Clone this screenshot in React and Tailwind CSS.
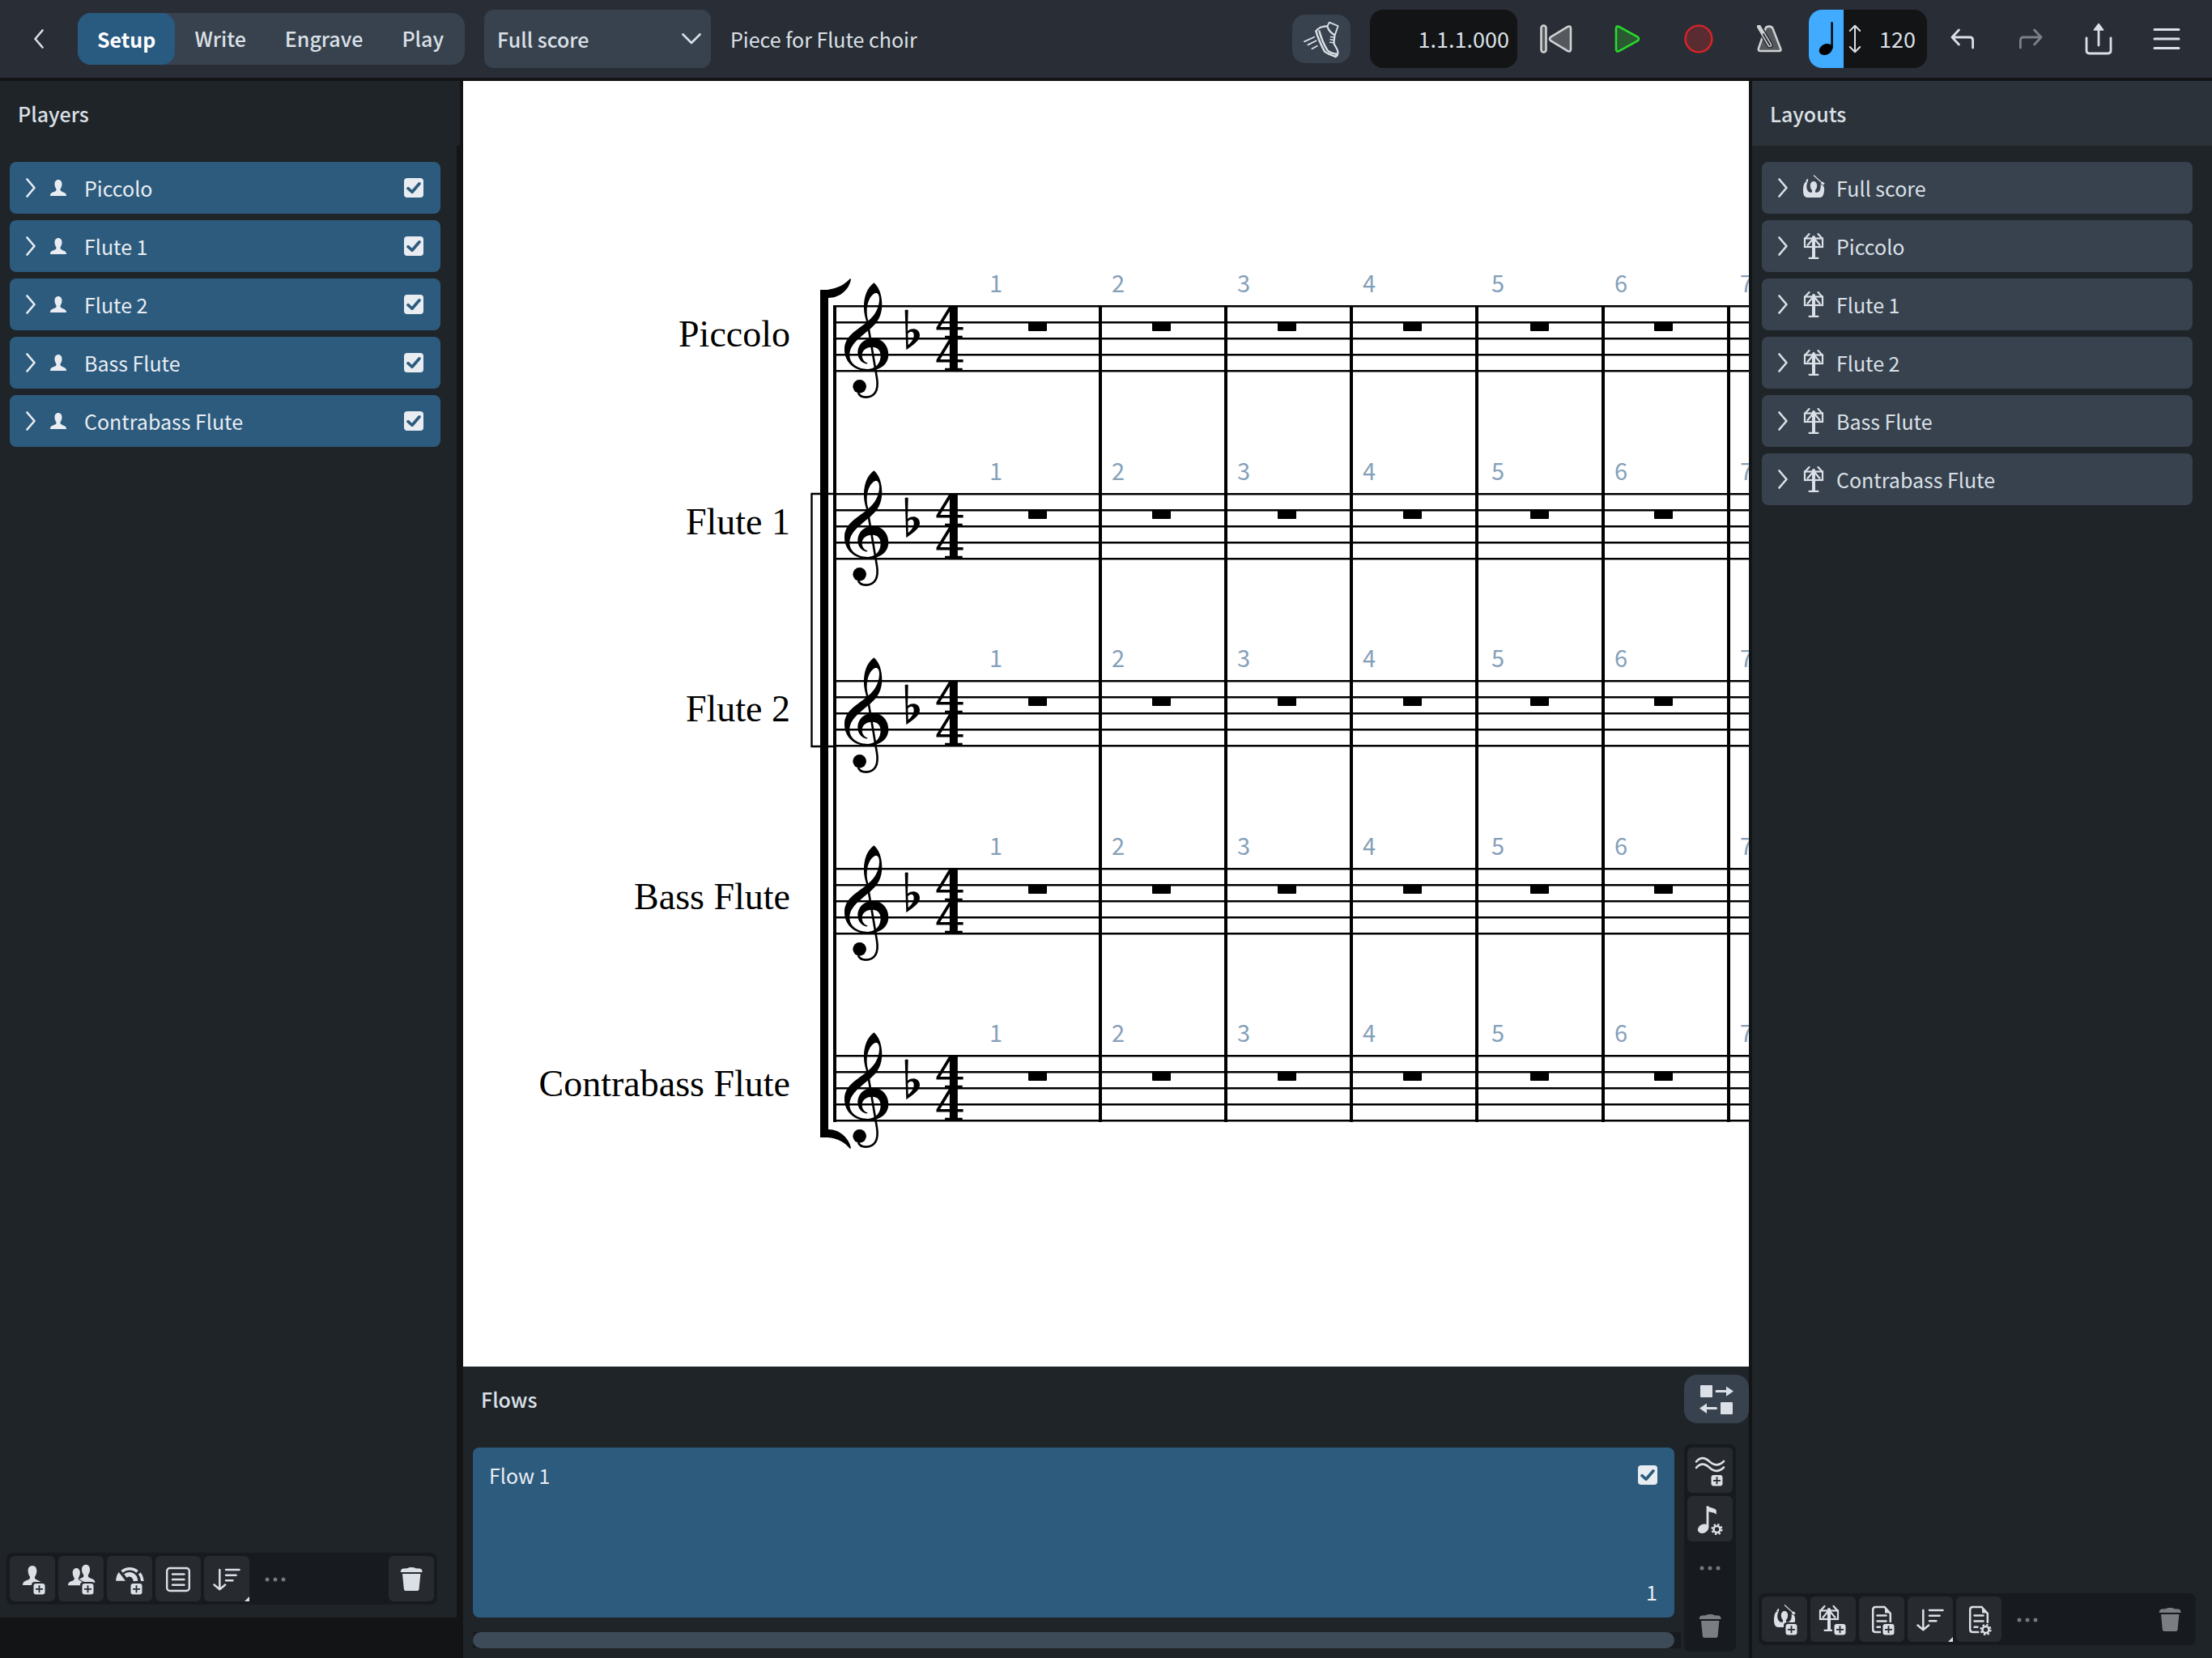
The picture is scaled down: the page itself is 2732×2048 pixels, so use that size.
import React from "react";

const INK = "#dbe0e7";

const players = ["Piccolo", "Flute 1", "Flute 2", "Bass Flute", "Contrabass Flute"];
const layouts = ["Full score", ...players];
const modes = ["Setup", "Write", "Engrave", "Play"];

/* ---------- small shared drawings ---------- */

function Chevron({ className }) {
  return (
    <svg className={className} width="12" height="24" viewBox="0 0 12 24" fill="none" stroke="currentColor" strokeWidth="2.6" strokeLinecap="round" strokeLinejoin="round">
      <path d="M1.5 1.5 L10.5 12 L1.5 22.5" />
    </svg>
  );
}

function PersonShape() {
  return (
    <path d="M28 12C31.5 12 33.4 14.8 33.4 18.5C33.4 22 32 24 31 25.8V27.6C32.4 30 37 30.4 39 32.6C39.9 33.6 40 35 40 36H16C16 33.4 17 32 19 31C21.6 29.7 24.4 29.4 25 27.6V25.8C24 24 22.6 22 22.6 18.5C22.6 14.8 24.5 12 28 12Z" />
  );
}

function PlusBadge() {
  return (
    <g>
      <rect x="27" y="32" width="18" height="18" rx="4" fill="#272a2f" />
      <rect x="29.5" y="34" width="14" height="13.5" rx="3" fill={INK} />
      <path d="M36.5 36.2V45.3M32 40.8H41" stroke="#272a2f" strokeWidth="1.8" />
    </g>
  );
}

function GearBadge() {
  return (
    <g>
      <circle cx="36.5" cy="41" r="8.6" fill="#272a2f" />
      <circle cx="36.5" cy="41" r="4" fill="none" stroke={INK} strokeWidth="2.6" />
      <circle cx="36.5" cy="41" r="6" fill="none" stroke={INK} strokeWidth="2.2" strokeDasharray="2.4 2.31" />
    </g>
  );
}

function ConductorShape() {
  return (
    <g>
      <path fill={INK} d="M1 20C1 14 2 10 4.4 8.6L6.4 9C5.2 12 5 14.6 5.6 17C6.4 20.4 8.8 22.4 12 21.6V19C10.4 17.4 9.8 15 9.8 13C9.8 10 11.6 8 14 8C16.4 8 18.2 10 18.2 13C18.2 15 17.6 17.4 16 19V21.6C19.2 22.4 21.6 20.4 22.4 17C22.9 14.6 22.8 13 22.6 11.8L26 13.5C27 15.4 27.4 17.6 27 20C26.6 24.4 25 28 22 28H6C3 28 1 24.4 1 20Z" />
      <path d="M4.6 7.8L6.6 5V8.4Z" fill={INK} stroke={INK} strokeWidth="1" />
      <path d="M14 0.5L24 9.6" stroke={INK} strokeWidth="1.2" />
      <path d="M23.6 9.4L26.8 11.6" stroke={INK} strokeWidth="3" />
    </g>
  );
}

function StandShape() {
  return (
    <g fill="none" stroke={INK} strokeWidth="2.2">
      <path d="M1.5 6.5L6.5 1M17.5 1L22.5 6.5" strokeLinecap="round" />
      <rect x="1" y="6.5" width="22" height="10.5" />
      <path d="M12 6L4 15.5M12 6L20 15.5" />
      <path d="M12 5V30" strokeWidth="4" strokeLinecap="round" />
      <path d="M6.5 30.8H17.5" strokeLinecap="round" />
    </g>
  );
}

function Glyph56({ children }) {
  return (
    <svg width="56" height="56" viewBox="0 0 56 56" fill={INK} aria-hidden="true">
      {children}
    </svg>
  );
}

function AddPlayer() {
  return (
    <Glyph56>
      <PersonShape />
      <PlusBadge />
    </Glyph56>
  );
}

function AddGroup() {
  return (
    <Glyph56>
      <g transform="translate(8 -0.5) scale(0.93)">
        <PersonShape />
      </g>
      <g transform="translate(-1.5 4.5) scale(0.85 0.88)" stroke="#272a2f" strokeWidth="2.4" paintOrder="stroke">
        <PersonShape />
      </g>
      <PlusBadge />
    </Glyph56>
  );
}

function AddEnsemble() {
  return (
    <Glyph56>
      <path d="M14.8 20L23 30.8H11.2C11.2 26.5 12.4 23 14.8 20Z" />
      <g fill="none" stroke={INK}>
        <path d="M18.6 19.4C24 14.6 32.4 14.6 37.6 19.4" strokeWidth="3.6" />
        <path d="M40.2 21.4C42.4 24 43.6 27.4 43.8 31" strokeWidth="3.4" />
        <path d="M22.8 24.6C28.6 20.4 35 24 35.6 31" strokeWidth="5.6" />
      </g>
      <PlusBadge />
    </Glyph56>
  );
}

function ListIcon() {
  return (
    <Glyph56>
      <g fill="none" stroke={INK} strokeWidth="2.4" strokeLinecap="round">
        <rect x="14.2" y="15" width="27.6" height="28" rx="3.5" />
        <path d="M21 22.5H35.5M21 29H35.5M21 35.7H35.5" />
      </g>
    </Glyph56>
  );
}

function SortIcon() {
  return (
    <Glyph56>
      <g fill="none" stroke={INK} strokeWidth="2.5" strokeLinecap="round" strokeLinejoin="round">
        <path d="M19.3 17V40.5M12.5 35.5L19.3 41.3L26.2 35.5" />
        <path d="M27 17H43.5M27 23.7H39.6M27 30.3H35.4" />
      </g>
      <path d="M56 50V56H50Z" />
    </Glyph56>
  );
}

function TrashIcon({ color = INK }) {
  return (
    <svg width="56" height="56" viewBox="0 0 56 56" fill={color} aria-hidden="true">
      <path d="M14.8 20C14.8 17 16 15.8 18.5 15.6L23 15.2C25 13.6 31.5 13.6 33.5 15.2L38 15.6C40.5 15.8 41.6 17 41.6 20Z" />
      <path d="M17 22H39.4L37.6 40.5C37.4 42.4 36.4 43 34.8 43H21.6C20 43 19 42.4 18.8 40.5Z" />
    </svg>
  );
}

function DocShape() {
  return (
    <g fill="none" stroke={INK} strokeWidth="2.5" strokeLinecap="round">
      <path d="M38.8 32V21L31.5 13H20.5C18.4 13 17.2 14.2 17.2 16.4V40.4C17.2 42.6 18.4 44 20.5 44H27.5" />
      <path d="M32 13.2V20.6H38.6Z" fill={INK} stroke="none" />
      <path d="M22.5 23.6H33.5M22.5 30.6H33.5M22.5 37.8H26.5" />
    </g>
  );
}

function Dots() {
  return (
    <svg width="56" height="56" viewBox="0 0 56 56" fill="#74787e" aria-hidden="true">
      <circle cx="18" cy="29" r="2.5" />
      <circle cx="28" cy="29" r="2.5" />
      <circle cx="38" cy="29" r="2.5" />
    </svg>
  );
}

const toolStyles = {
  raised: "size-14 shrink-0 rounded-md bg-[#272a2f]",
  menu: "size-14 shrink-0 rounded-md rounded-br-none bg-[#272a2f]",
  plain: "size-14 shrink-0 rounded-md",
};

function ToolButton({ label, kind = "raised", children }) {
  return (
    <button type="button" aria-label={label} className={toolStyles[kind]}>
      {children}
    </button>
  );
}

function Tick({ label }) {
  return (
    <span className="relative size-6 shrink-0">
      <input type="checkbox" defaultChecked aria-label={label} className="block size-6 appearance-none rounded bg-[#e9edf2]" />
      <svg className="pointer-events-none absolute inset-0" width="24" height="24" viewBox="0 0 24 24" fill="none" stroke="#2c5b7e" strokeWidth="3.6" strokeLinecap="round" strokeLinejoin="round">
        <path d="M5 12.6L10 17.2L19 6.8" />
      </svg>
    </span>
  );
}

/* ---------- top bar ---------- */

function HeaderButton({ label, narrow, children }) {
  return (
    <button type="button" aria-label={label} className={narrow ? "flex h-16 w-[84px] items-center justify-center" : "flex h-16 w-[88px] items-center justify-center"}>
      {children}
    </button>
  );
}

function ShoeIcon() {
  return (
    <svg width="72" height="60" viewBox="0 0 72 60" fill="none" stroke={INK} strokeLinecap="round" strokeLinejoin="round">
      <path strokeWidth="1.8" d="M43.3 14.5L45.8 9.6L56.6 14L53 24.6" />
      <path strokeWidth="2.2" d="M29.6 20.4C31 18 35 15.6 38 15C40.5 14.4 42 14 43.3 14.6C44.6 18.6 48 23 52.4 25.2C52.8 29 51 32 51.6 35.4C52.4 39 56.4 42.4 56.4 46.4C56.4 49 55 51.4 53.4 52" />
      <path strokeWidth="2.4" d="M29.4 20.6C31.6 29 36 38 40 45.6C44 48.6 49 50.4 53.4 52C54.4 50.8 54.6 49.6 54.4 48.6C50.6 48.4 46.6 47 43.6 44.4C39.6 38 35.4 28 33.4 20.4" />
      <path strokeWidth="1.5" d="M47.4 27.4L51.4 28M47 30.8L51 31.4M46.6 34.2L50.4 34.8" />
      <path strokeWidth="1.8" d="M15 33.4L27.2 27.8M19.4 37.4L29.6 32.2M24.4 42.2L30.8 38.8" />
    </svg>
  );
}

function TopBar() {
  return (
    <header className="flex h-[100px] shrink-0 items-center border-b-4 border-[#131416] bg-[#292d35] pr-3.5">
      <button type="button" aria-label="Back" className="flex h-16 w-24 items-center justify-center">
        <Chevron className="rotate-180" />
      </button>
      <nav className="flex h-16 rounded-2xl bg-[#37424e] pr-0.5">
        {modes.map((mode, i) => (
          <button
            key={mode}
            type="button"
            className={
              i === 0
                ? "rounded-2xl bg-[#295a80] px-6 font-bold text-white"
                : "px-6 pb-0.5 font-medium"
            }
          >
            {mode}
          </button>
        ))}
      </nav>
      <div className="relative ml-6">
        <select aria-label="Layout" className="block h-[72px] w-[280px] appearance-none rounded-xl bg-[#37424e] px-4 font-medium">
          <option>Full score</option>
        </select>
        <svg className="pointer-events-none absolute top-7 right-3" width="24" height="16" viewBox="0 0 24 16" fill="none" stroke="currentColor" strokeWidth="2.6" strokeLinecap="round" strokeLinejoin="round">
          <path d="M1.5 2.5L12 13L22.5 2.5" />
        </svg>
      </div>
      <h1 className="ml-6 whitespace-nowrap">Piece for Flute choir</h1>

      <div className="ml-auto flex items-center">
        <button type="button" aria-label="Tap tempo" className="mr-6 h-[60px] w-[72px] rounded-2xl bg-[#37424e]">
          <ShoeIcon />
        </button>
        <output className="mr-1 flex h-[72px] w-[182px] items-center justify-end rounded-2xl bg-[#131416] pr-2.5 text-[27px]">1.1.1.000</output>
        <HeaderButton label="Rewind">
          <svg width="40" height="36" viewBox="0 0 40 36" fill="#55595e" stroke="#d0d1d2" strokeWidth="2.6" strokeLinejoin="round">
            <rect x="1.5" y="1.5" width="6" height="33" rx="3" />
            <path d="M34 3.2Q38 1.2 38 5V31Q38 34.8 34 32.8L13.4 20.4Q10.6 18 13.4 15.6Z" />
          </svg>
        </HeaderButton>
        <HeaderButton label="Play">
          <svg width="32" height="36" viewBox="0 0 32 36" fill="#2b5932" stroke="#27da2b" strokeWidth="2.6" strokeLinejoin="round">
            <path d="M6 3.2Q2 1.2 2 5V31Q2 34.8 6 32.8L28.6 20.4Q31.4 18 28.6 15.6Z" />
          </svg>
        </HeaderButton>
        <HeaderButton label="Record">
          <svg width="36" height="36" viewBox="0 0 36 36" fill="#5a2c31" stroke="#da2327" strokeWidth="2.4">
            <circle cx="18" cy="18" r="16.4" />
          </svg>
        </HeaderButton>
        <HeaderButton label="Click">
          <svg width="32" height="34" viewBox="0 0 32 34" fill="none" strokeLinecap="round" strokeLinejoin="round">
            <path d="M10.4 4.4Q11.4 1.6 15 1.6Q18.6 1.6 19.6 4.4L29 28.6Q30.4 32 27.4 32H4Q1 32 2 28.6Z" fill="#55595e" stroke="#d0d1d2" strokeWidth="2.6" />
            <path d="M2.4 2L15.8 24.6" stroke="#292d35" strokeWidth="8" />
            <path d="M2.4 2L15.8 24.6" stroke="#d0d1d2" strokeWidth="5" />
            <path d="M8 11.4L15.8 24.6" stroke="#292d35" strokeWidth="2" />
          </svg>
        </HeaderButton>
        <div className="mr-0.5 ml-1 flex h-[72px] overflow-hidden rounded-2xl bg-[#131416]">
          <button type="button" aria-label="Beat unit" className="flex w-[43px] items-center justify-center bg-[#41abff]">
            <svg width="20" height="44" viewBox="0 0 20 44">
              <ellipse cx="9" cy="35" rx="8.6" ry="6.6" transform="rotate(-28 9 35)" />
              <path d="M15.4 34V2.4Q15.4 1 16.6 1Q17.8 1 17.8 2.4V34Z" />
            </svg>
          </button>
          <button type="button" className="flex w-[103px] items-center justify-between pr-3.5 pl-1.5 text-[27px]">
            <svg width="16" height="36" viewBox="0 0 16 36" fill="none" stroke="currentColor" strokeWidth="2" strokeLinecap="round" strokeLinejoin="round">
              <path d="M8 2V34M1.8 8L8 1.8L14.2 8M1.8 28L8 34.2L14.2 28" />
            </svg>
            120
          </button>
        </div>
        <HeaderButton label="Undo" narrow>
          <svg width="30" height="26" viewBox="0 0 30 26" fill="none" stroke="currentColor" strokeWidth="2.8" strokeLinecap="round" strokeLinejoin="round">
            <path d="M10.4 2L2 11L10.4 20M2 11H24Q27.6 11 27.6 14.6V24" />
          </svg>
        </HeaderButton>
        <HeaderButton label="Redo" narrow>
          <svg width="30" height="26" viewBox="0 0 30 26" fill="none" stroke="#7d8187" strokeWidth="2.8" strokeLinecap="round" strokeLinejoin="round">
            <path d="M19.6 2L28 11L19.6 20M28 11H6Q2.4 11 2.4 14.6V24" />
          </svg>
        </HeaderButton>
        <HeaderButton label="Share" narrow>
          <svg width="34" height="40" viewBox="0 0 34 40" fill="none" stroke="currentColor" strokeWidth="2.8" strokeLinecap="round" strokeLinejoin="round">
            <path d="M2 19V34.6Q2 38 5.4 38H28.6Q32 38 32 34.6V19M17 28V6" />
            <path d="M17 1.6L22.6 9H11.4Z" fill="currentColor" strokeWidth="1.6" />
          </svg>
        </HeaderButton>
        <HeaderButton label="Menu" narrow>
          <svg width="34" height="30" viewBox="0 0 34 30" fill="none" stroke="currentColor" strokeWidth="3" strokeLinecap="round">
            <path d="M2 3.5H32M2 15H32M2 26.5H32" />
          </svg>
        </HeaderButton>
      </div>
    </header>
  );
}

/* ---------- side panels ---------- */

function PlayersPanel() {
  return (
    <aside className="flex w-[572px] shrink-0 flex-col bg-[#131416] pb-[50px]">
      <h2 className="mr-1 flex h-20 items-center bg-[#1f2428] pl-[22px] font-medium">Players</h2>
      <div className="mr-2 flex flex-1 flex-col bg-[#1f2428] pt-5 pr-5 pb-4 pl-3">
        <ul className="flex flex-col gap-2">
          {players.map((name) => (
            <li key={name} className="flex h-16 items-center rounded-lg bg-[#2c5b7e] pr-[21px] pl-5 text-[#e9edf2]">
              <button type="button" aria-label={"Expand " + name} className="mr-[18px]">
                <Chevron />
              </button>
              <svg width="20" height="20" viewBox="16 12 24 24" preserveAspectRatio="none" fill="#e9edf2" aria-hidden="true">
                <PersonShape />
              </svg>
              <span className="ml-[22px] flex-1">{name}</span>
              <Tick label={name} />
            </li>
          ))}
        </ul>
        <div className="mt-auto -mr-4 -ml-1 flex w-[532px] gap-1 rounded-lg bg-[#171a1e] p-1">
          <ToolButton label="Add solo player"><AddPlayer /></ToolButton>
          <ToolButton label="Add section player"><AddGroup /></ToolButton>
          <ToolButton label="Add ensemble"><AddEnsemble /></ToolButton>
          <ToolButton label="Add group"><ListIcon /></ToolButton>
          <ToolButton label="Sort players" kind="menu"><SortIcon /></ToolButton>
          <ToolButton label="More" kind="plain"><Dots /></ToolButton>
          <span className="flex-1" />
          <ToolButton label="Delete player"><TrashIcon /></ToolButton>
        </div>
      </div>
    </aside>
  );
}

function LayoutsPanel() {
  return (
    <aside className="flex w-[572px] shrink-0 flex-col border-l-4 border-[#131416] bg-[#1f2428]">
      <h2 className="flex h-20 items-center bg-[#2c3239] pl-[22px] font-medium">Layouts</h2>
      <ul className="flex flex-col gap-2 pt-5 pr-6 pl-3">
        {layouts.map((name, i) => (
          <li key={name} className="flex h-16 items-center rounded-lg bg-[#37424e] pl-5">
            <button type="button" aria-label={"Expand " + name} className="mr-[18px]">
              <Chevron />
            </button>
            {i === 0 ? (
              <svg width="28" height="32" viewBox="0 0 28 32" aria-hidden="true"><ConductorShape /></svg>
            ) : (
              <svg width="28" height="32" viewBox="-2 0 28 32" aria-hidden="true"><StandShape /></svg>
            )}
            <span className="ml-[14px]">{name}</span>
          </li>
        ))}
      </ul>
      <div className="mt-auto mr-5 mb-4 ml-2 flex gap-1 rounded-lg bg-[#171a1e] p-1">
        <ToolButton label="Add full score layout">
          <Glyph56>
            <g transform="translate(14 10)"><ConductorShape /></g>
            <PlusBadge />
          </Glyph56>
        </ToolButton>
        <ToolButton label="Add part layout">
          <Glyph56>
            <g transform="translate(11 11)"><StandShape /></g>
            <PlusBadge />
          </Glyph56>
        </ToolButton>
        <ToolButton label="Add custom layout">
          <Glyph56><DocShape /><PlusBadge /></Glyph56>
        </ToolButton>
        <ToolButton label="Sort layouts" kind="menu"><SortIcon /></ToolButton>
        <ToolButton label="Layout options">
          <Glyph56><DocShape /><GearBadge /></Glyph56>
        </ToolButton>
        <ToolButton label="More" kind="plain"><Dots /></ToolButton>
        <span className="flex-1" />
        <ToolButton label="Delete layout" kind="plain"><TrashIcon color="#7a7d82" /></ToolButton>
      </div>
    </aside>
  );
}

/* ---------- score ---------- */

const STAVES = [278, 510, 741, 973, 1204];
const BARLINES = [787, 942, 1097, 1252, 1408, 1563];
const RESTS = [710, 863, 1018, 1173, 1330, 1483];
const NUMBERS = [658, 809, 964, 1119, 1278, 1430, 1585];

function Clef() {
  return (
    <g transform="scale(0.3333)">
      <path
        fillRule="evenodd"
        d="M298 88C318 105 328 135 328 168C328 210 312 236 283 260C242 294 208 318 208 355C208 388 238 408 275 408C305 408 323 385 323 358C323 338 310 326 292 326C268 326 254 340 254 356C254 370 262 381 274 385C275 389 270 389 268 388C250 383 238 368 238 346C238 318 260 293 295 293C328 293 352 320 352 354C352 392 318 414 275 414C225 414 189 382 189 335C189 288 228 268 271 235C265 212 261 200 261 178C261 140 272 108 298 88ZM303 126C284 134 272 162 272 195C272 208 274 216 277 229C302 210 318 180 318 148C318 132 312 124 303 126Z"
      />
      <path d="M274 232L309 440C317 488 300 512 268 512C252 512 243 504 240 496" fill="none" stroke="#000" strokeWidth="8" />
      <circle cx="245" cy="472" r="25" />
      <path
        fillRule="evenodd"
        d="M413 190Q419 186 425 189L423 266C440 252 468 258 468 282C468 302 446 316 418 337ZM424 277C430 267 447 265 446 284C445 299 434 311 425 318Z"
      />
    </g>
  );
}

function Score() {
  return (
    <svg className="block h-full w-full" fill="#000" role="img" aria-label="Score">
      {STAVES.map((y, s) => (
        <g key={y}>
          <text x="404" y={y + 50} textAnchor="end" className="font-['Liberation_Serif',serif] text-[46px]">{players[s]}</text>
          {[0, 20, 40, 60, 80].map((d) => (
            <rect key={d} x="458" y={y + d - 1} width="100%" height="2.5" />
          ))}
          <g transform={"translate(408 " + (y - 58) + ")"}>
            <Clef />
          </g>
          <text x="601" y={y + 40} textAnchor="middle" className="font-['DejaVu_Serif',serif] text-[54px] font-bold">4</text>
          <text x="601" y={y + 80} textAnchor="middle" className="font-['DejaVu_Serif',serif] text-[54px] font-bold">4</text>
          {RESTS.map((x) => (
            <rect key={x} x={x - 12} y={y + 20} width="23" height="11" rx="1" />
          ))}
          {NUMBERS.map((x, i) => (
            <text key={x} x={x} y={y - 17} textAnchor="middle" fill="#859fb9" className="text-[29px]">{i + 1}</text>
          ))}
        </g>
      ))}
      {BARLINES.map((x) => (
        <rect key={x} x={x - 2} y="277" width="4" height="1009" />
      ))}
      <rect x="457" y="277" width="4" height="1009" />
      <rect x="441" y="262" width="10" height="1038" />
      <path d="M441 258H450C463 256 472 251 478 244L479 245C477 257 466 268 451 268H441Z" />
      <path d="M441 1305H450C463 1306 471 1311 478 1319L479 1318C477 1307 466 1295 451 1295H441Z" />
      <path d="M458 510H430.5V822H458" fill="none" stroke="#000" strokeWidth="2.4" />
    </svg>
  );
}

/* ---------- flows ---------- */

function FlowsPanel() {
  return (
    <section className="flex h-[360px] shrink-0 flex-col bg-[#1f2428] pl-3">
      <div className="flex h-20 items-center justify-between">
        <h2 className="pl-[10px] font-medium">Flows</h2>
        <button type="button" aria-label="Switch panel" className="h-[60px] w-20 rounded-2xl bg-[#37424e]">
          <svg width="80" height="60" viewBox="0 0 80 60" fill={INK} stroke={INK}>
            <g stroke="none">
              <rect x="20" y="13" width="15" height="15" rx="1" />
              <rect x="45" y="34" width="15" height="15" rx="1" />
              <path d="M52 14.5L61 20.5L52 26.8ZM28 35.5L19 41.6L28 48Z" />
            </g>
            <path d="M40 20.5H53M27 41.6H39.5" strokeWidth="3" strokeLinecap="round" />
          </svg>
        </button>
      </div>
      <div className="flex flex-1 pt-4 pr-4 pb-2">
        <div className="flex flex-1 flex-col pt-1">
          <div className="flex h-[210px] flex-col justify-between rounded-lg bg-[#2c5b7e] pt-4 pr-[21px] pb-3.5 pl-5 text-[#e9edf2]">
            <div className="flex items-center justify-between">
              <span>Flow 1</span>
              <Tick label="Flow 1" />
            </div>
            <span className="text-right">1</span>
          </div>
          <div className="mt-[18px] -mr-2 bg-[#171a1e] pr-2">
            <div className="h-5 rounded-full bg-[#3d4a57]" />
          </div>
        </div>
        <div className="ml-3 flex flex-col gap-1 rounded-lg bg-[#171a1e] p-1">
          <ToolButton label="Add flow">
            <Glyph56>
              <g fill="none" stroke={INK} strokeWidth="2.6" strokeLinecap="round">
                <path d="M11 17.5C16 11.5 21.5 12 27 17C33 22.5 39.5 22.5 45 17" />
                <path d="M11 25C16 19 21.5 19.5 27 24.5C33 30 39.5 30 45 24.5" />
              </g>
              <PlusBadge />
            </Glyph56>
          </ToolButton>
          <ToolButton label="Notation options">
            <Glyph56>
              <ellipse cx="19.6" cy="40.3" rx="7" ry="5.4" transform="rotate(-28 19.6 40.3)" />
              <path d="M23.6 39V12.6L25.4 12C27 15 35.8 14.6 35.8 18V22.8C33 19.6 29 20.4 26.4 19V39Z" />
              <GearBadge />
            </Glyph56>
          </ToolButton>
          <ToolButton label="More" kind="plain"><Dots /></ToolButton>
          <span className="flex-1" />
          <ToolButton label="Delete flow" kind="plain"><TrashIcon color="#7a7d82" /></ToolButton>
        </div>
      </div>
    </section>
  );
}

export default function App() {
  return (
    <div className="flex h-screen flex-col bg-[#131416] font-['Noto_Sans_CJK_SC','Source_Sans_Pro',sans-serif] text-[25px] leading-9 text-[#dbe0e7]">
      <TopBar />
      <div className="flex min-h-0 flex-1">
        <PlayersPanel />
        <main className="flex min-w-0 flex-1 flex-col">
          <div className="min-h-0 flex-1 overflow-hidden bg-white">
            <Score />
          </div>
          <FlowsPanel />
        </main>
        <LayoutsPanel />
      </div>
    </div>
  );
}
